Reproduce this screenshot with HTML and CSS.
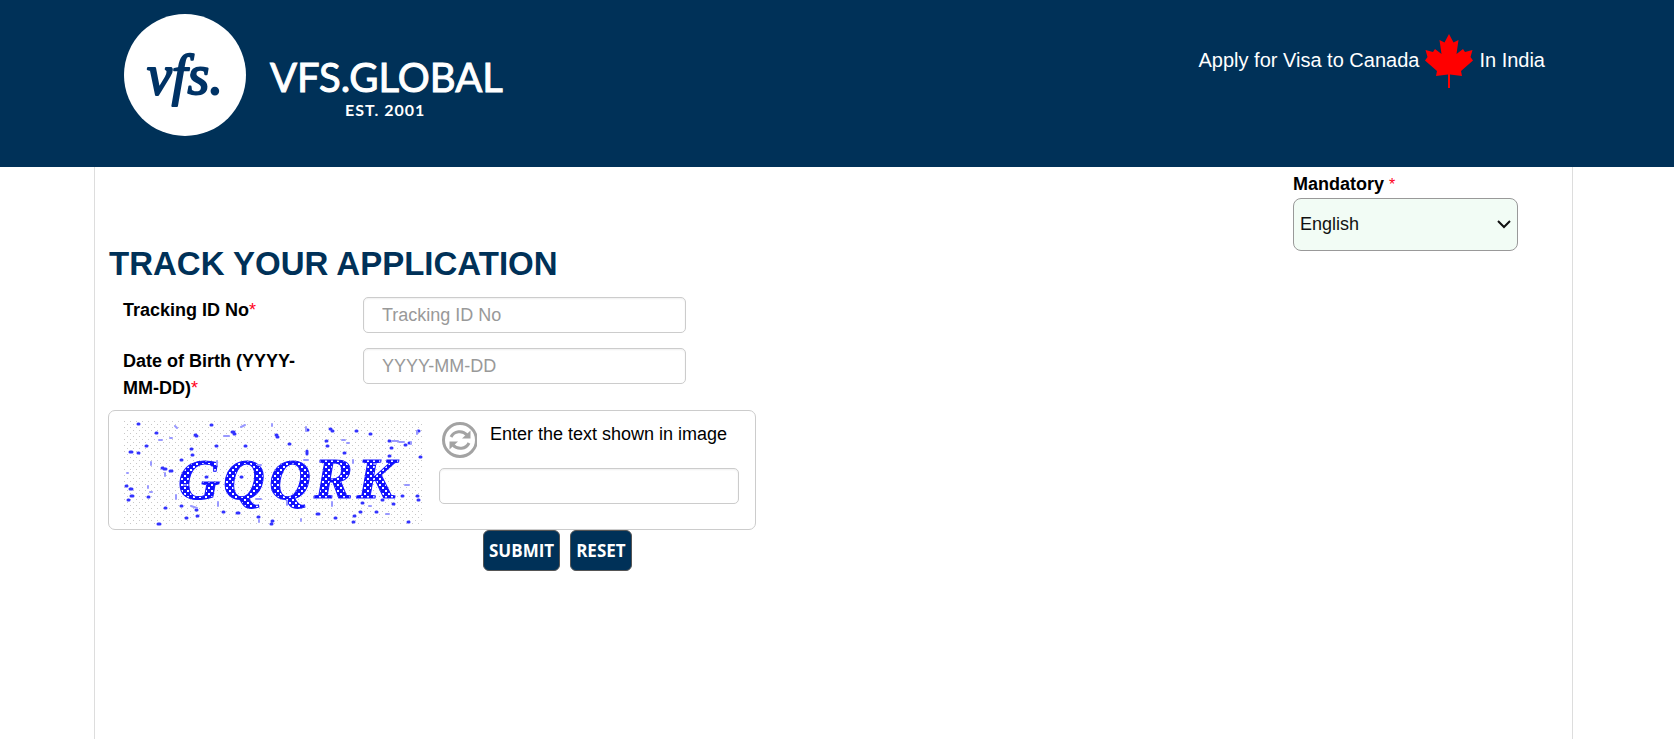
FILE: index.html
```
<!DOCTYPE html>
<html lang="en">
<head>
<meta charset="utf-8">
<title>Track Your Application</title>
<link rel="stylesheet" href="styles.css">
</head>
<body>
<header class="header">
  <svg class="logo" viewBox="0 0 390 122" role="img" aria-label="VFS.Global, est. 2001">
    <circle cx="61" cy="61" r="61" fill="#fff"/>
    <text class="logo-mark" x="23" y="80">vfs.</text>
    <text class="logo-name" x="146" y="78">VFS.GLOBAL</text>
    <text class="logo-est" x="221" y="102">EST. 2001</text>
  </svg>
  <p class="tagline">
    <span>Apply for Visa to Canada</span>
    <svg class="leaf" viewBox="0 0 48 54" aria-hidden="true">
      <path fill="#f00" d="M24 0 L28.5 8.500 L33.500 6 L31.500 20 L38 15 L40 18 L47.500 16 L45.500 23 L48 26.500 L36 37 L37 42 L25 40.500 V54 H23 V40.500 L11 42 L12 37 L0 26.500 L2.500 23 L.5 16 L8 18 L10 15 L16.500 20 L14.500 6 L19.500 8.500Z"/>
    </svg>
    <span>In India</span>
  </p>
</header>
<main class="page">
  <div class="language">
    <label class="label" for="language">Mandatory <span class="star">*</span></label>
    <div class="select-box">
      <select class="select" id="language"><option>English</option></select>
      <svg class="chevron" viewBox="0 0 14 9" fill="none" stroke="#111" stroke-width="2" aria-hidden="true"><path d="M1 1l6 6 6-6"/></svg>
    </div>
  </div>
  <h1 class="title">TRACK YOUR APPLICATION</h1>
  <form class="form">
    <div class="row">
      <label class="label" for="tracking">Tracking ID No<span class="star">*</span></label>
      <input class="input" id="tracking" type="text" placeholder="Tracking ID No">
    </div>
    <div class="row">
      <label class="label" for="dob">Date of Birth (YYYY-MM-DD)<span class="star">*</span></label>
      <input class="input" id="dob" type="text" placeholder="YYYY-MM-DD">
    </div>
    <div class="captcha">
      <svg class="captcha-image" viewBox="0 0 300 105" role="img" aria-label="Captcha">
        <defs>
          <pattern id="dots" width="6" height="6" patternUnits="userSpaceOnUse">
            <path fill="#c8c8c8" d="M0 0h1v1H0zM3 3h1v1H3z"/>
          </pattern>
          <pattern id="ink" width="6" height="6" patternUnits="userSpaceOnUse">
            <path fill="#11f" d="M0 0h6v6H0z"/>
            <path fill="#fff" d="M0 0h2v2H0zM3 3h2v2H3z"/>
          </pattern>
        </defs>
        <rect width="300" height="105" fill="url(#dots)"/>
        <g class="captcha-text">
          <text x="54" y="78">G</text>
          <text x="99" y="78">Q</text>
          <text x="145" y="78">Q</text>
          <text x="190" y="77">R</text>
          <text x="233" y="77">K</text>
        </g>
        <path class="noise" d="M14 3h1M32 12h1M87 4h1M71 14h1M72 15h1M108 11h2M110 13h1M22 25h1M67 28h1M68 34h1M6 31h2M14 32h1M38 47h1M40 48h2M46 50h2M57 39h1M92 25h1M121 25h1M152 14h1M153 16h1M165 23h1M183 9h1M202 20h1M203 25h1M206 8h1M208 10h1M183 30v3M220 32h1M232 10h1M246 13h1M265 20h1M267 27h1M265 35h1M285 22h1M281 24h1M294 10h1M296 36h1M293 75h1M294 79h1M2 65h1M6 68h2M7 75h2M4 79h1M24 76h1M34 103h2M41 87h1M57 85h1M62 97h1M73 95h1M72 89h1M99 91h1M113 92h2M134 96h1M148 100h1M147 103h1M193 93h2M211 97h1M229 101h1M230 95h1M238 82h1M252 91h1M269 83h1M278 75h1M284 101h1M258 79h1M82 56h1M117 56h1M236 91h1"/>
        <path class="noise-soft" d="M35 19h3M46 17h2M51 5l2 2M117 6l4-2M100 15h5M148 3v2M182 6v4M218 19h3M223 22h2M229 39v3M268 20h6M275 21h5M287 21v2M250 43h2M27 41v3M3 52h1M26 71h2M60 64h2M41 52v3M52 74v4M94 81v4M132 78h5M177 98v2M135 99v2M163 80v4M208 81v4M245 85h2M262 93h3M281 64h4M293 10v3M93 40v4M134 44h3M180 39h4M24 65v2M67 85l6 2"/>
      </svg>
      <div class="captcha-entry">
        <div class="captcha-head">
          <button class="refresh" type="button" aria-label="Refresh image">
            <svg viewBox="0 0 38 38" fill="none" stroke="#a3a3a3" aria-hidden="true">
              <circle cx="21" cy="19" r="16.500" stroke-width="3"/>
              <path stroke-width="3" d="M12 16a9.500 9 0 0 1 16-2M30 22a9.500 9 0 0 1-16 2"/>
              <path fill="#a3a3a3" stroke="none" d="M31.500 9.500V17.500H23zM10.500 28.500V20.500H19z"/>
            </svg>
          </button>
          <label for="captcha">Enter the text shown in image</label>
        </div>
        <input class="input" id="captcha" type="text">
      </div>
    </div>
    <div class="actions">
      <button class="button" type="submit">SUBMIT</button>
      <button class="button" type="reset">RESET</button>
    </div>
  </form>
</main>
</body>
</html>
```
FILE: styles.css
```
* { box-sizing: border-box; }
html, body { height: 100%; }
body {
  margin: 0;
  display: flex;
  flex-direction: column;
  background: #fff;
  color: #000;
  font: 18px/27px "Liberation Sans", Arial, sans-serif;
}
button, input, select { font: inherit; }
.header {
  display: flex;
  justify-content: space-between;
  align-items: flex-start;
  padding: 14px 129px 31px 124px;
  background: #003158;
  color: #fff;
}
.logo { display: block; width: 390px; height: 122px; }
.logo-mark {
  font: italic 56px "Liberation Serif", serif;
  fill: #003366;
  stroke: #003366;
  stroke-width: 2;
  stroke-linejoin: round;
}
.logo-name { font: 40px Lato, sans-serif; fill: #fff; stroke: #fff; stroke-width: 1; }
.logo-est { font: bold 16px Lato, sans-serif; letter-spacing: 1px; fill: #fff; }
.tagline {
  display: flex;
  align-items: center;
  gap: 6px;
  margin: 0;
  padding-top: 18px;
  font-size: 20px;
}
.leaf { width: 48px; height: 54px; margin-top: 2px; }
.page {
  flex: 1;
  margin: 0 101px 0 94px;
  padding: 4px 14px 0 13px;
  border: solid #ddd;
  border-width: 0 1px;
}
.language { width: 225px; margin: 0 40px 0 auto; }
.label { font-weight: bold; }
.star { color: #ff0020; font-weight: normal; }
.language .label { display: block; }
.language .star { font-size: 16px; }
.select-box { display: grid; align-items: center; }
.select, .chevron { grid-area: 1 / 1; }
.select {
  width: 100%;
  height: 53px;
  padding: 0 6px;
  border: 1px solid #999;
  border-radius: 8px;
  background: #f2fcf5;
  color: #111;
  appearance: none;
}
.chevron { width: 14px; height: 9px; margin-right: 7px; justify-self: end; pointer-events: none; }
.title {
  margin: -7px 0 13px 1px;
  color: #003158;
  font-size: 33px;
  line-height: 40px;
}
.form { width: 648px; }
.row {
  display: grid;
  grid-template-columns: 185px 323px;
  column-gap: 55px;
  align-items: start;
  padding-left: 15px;
  margin-bottom: 15px;
}
.row + .row { margin-bottom: 8px; }
.input {
  display: block;
  width: 100%;
  height: 36px;
  padding: 0 18px;
  border: 1px solid #ccc;
  border-radius: 5px;
  background: #fff;
  box-shadow: inset 0 1px 2px #0001;
}
.input::placeholder { color: #999; }
.captcha {
  display: flex;
  gap: 15px;
  height: 120px;
  padding: 10px 16px 10px 15px;
  border: 1px solid #ccc;
  border-radius: 7px;
}
.captcha-image { flex: none; width: 300px; height: 105px; }
.captcha-text { font: italic bold 58px "Liberation Serif", serif; fill: url(#ink); stroke: #11f; stroke-width: 1; }
.noise { fill: none; stroke: #33f; stroke-width: 3; stroke-linecap: round; }
.noise-soft { fill: none; stroke: #99f; stroke-width: 2; stroke-linecap: round; }
.captcha-entry { flex: 1; }
.captcha-head { display: flex; gap: 13px; height: 47px; }
.refresh { width: 38px; height: 38px; padding: 0; border: 0; background: none; }
.refresh svg { display: block; }
.actions { display: flex; gap: 10px; padding-left: 375px; }
.button {
  height: 41px;
  padding: 0 5px;
  border: 1px solid #555;
  border-radius: 6px;
  background: #003158;
  color: #fff;
  font: bold 17px/27px "Open Sans", sans-serif;
}
```
